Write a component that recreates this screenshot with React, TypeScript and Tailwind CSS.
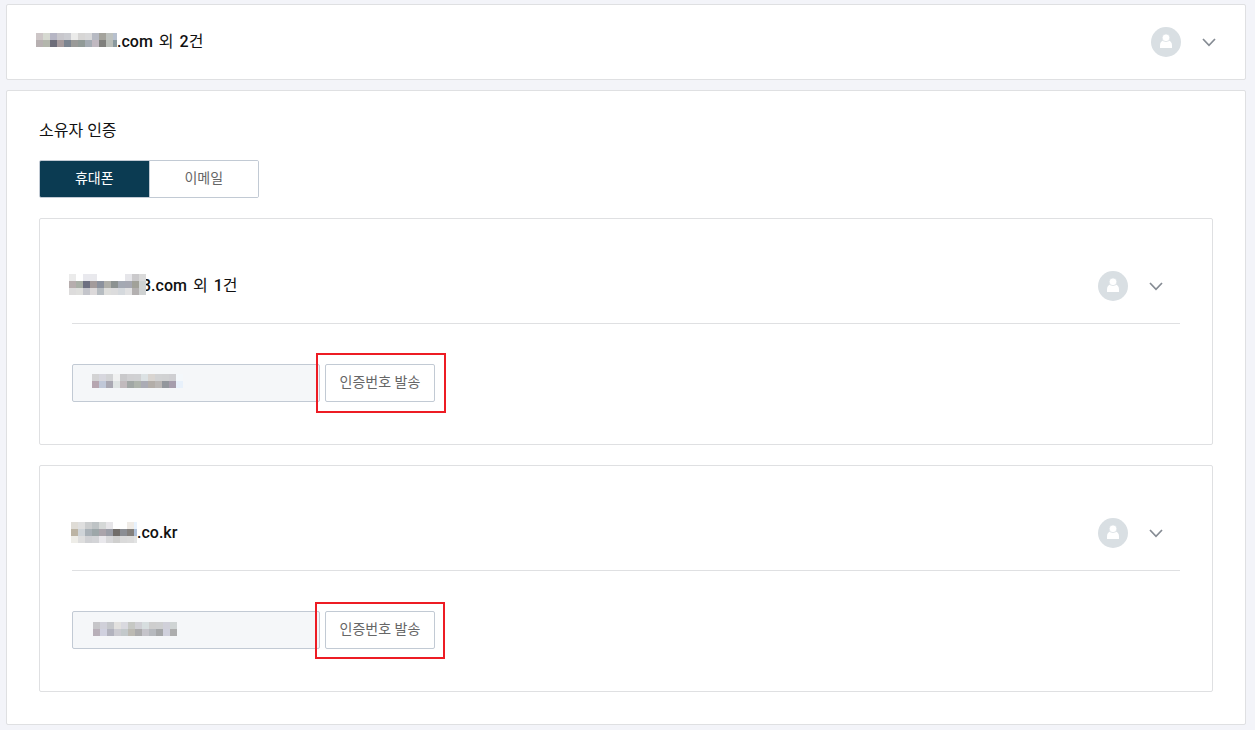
import { useState } from "react";
import type { ReactNode } from "react";

const CELL = 7;

// one string per row, colours separated by spaces, "-" leaves the cell empty
const masks = {
  summary: [
    "#cdc6c7 #d6d9d1 #b6b6c4 #c8c7cc #cbccd1 #ebebea #d7d6d5 #d9d9da #b7bac3 #a4a39c #bec2bf #b7c0ce",
    "#b7b0b1 #b3b6ac #6d6d79 #a59a9c #7b8490 #9a9a98 #919a97 #a4abb3 #c0b8c0 #7f7f7c #b9bdb8 #8a999e",
  ],
  first: [
    "#ebebeb #ffffff #e9e9ee #e9e9ed - - - - #e6e6ea #cbcacc #dadada",
    "#b6adad #a9afa6 #6d7080 #a39b9b #8b919d #afafa9 #8c9291 #a4a9b3 #a6a8b2 #a1a199 #cfd3d2",
    "#dddcdc #dfdfdd #c4c5cb #dcd9da #b6bcc1 #dededc #dcdcdd #d5d9dd #e1e1e2 #b3b0b0 #cfd2d2",
  ],
  second: [
    "#dfdcd6 #dfdfdf #cbcdce #bec3c5 #d5d8d7 #e6e5e8 - - #efebe6 #e8f2fd",
    "#bcb4a4 #cfd4d8 #a9b1b7 #9da7a9 #aaa4ab #9a9da6 #716d69 #8b8e94 #83807d #afc0d8",
    "#eeede8 #dedede #d0d1d4 #d3d4d7 #e9e8ec #d8d8da #cfcfce #dadada #dcdcdc #e2e3e3",
  ],
  firstPhone: [
    "#d3d3d4 #d7d7de #d2d3d5 #f0f1f1 #c9c9cb #d0d0d2 #d0d1d3 #dce2e4 #d9d5d1 #d2d3d4 #d1d2d3 #cfcfd2 #f4f8fb",
    "#b6a6b0 #c0c8d8 #a9a8b2 #dfe4e3 #c1babd #a1a7a5 #aeb4ac #abacb5 #b3aea9 #bab7b5 #93979d #a69dac #e8f1fb",
  ],
  secondPhone: [
    "#c6c6c9 #d0d0d9 #c5c7cb #e2e1df #d9d9df #c6c8c4 #d0d0d5 #d7dedf #cecece #cecfd0 #d0d0d9 #cfd4d4",
    "#b8b0b9 #d0d1df #b2b3be #cbcbd1 #c3c9cb #bcbab3 #ababac #c5c4ca #b6b9be #a5a7a9 #cfd0dc #adaeae",
  ],
};

function Mask({ rows, width, className = "" }: { rows: string[]; width: number; className?: string }) {
  const height = rows.length * CELL;
  return (
    <svg
      className={`shrink-0 ${className}`}
      width={width}
      height={height}
      viewBox={`0 0 ${width} ${height}`}
      shapeRendering="crispEdges"
      aria-hidden="true"
    >
      {rows.map((row, y) =>
        row.split(" ").map((fill, x) =>
          fill === "-" ? null : (
            <rect key={`${x}-${y}`} x={x * CELL} y={y * CELL} width={CELL} height={CELL} fill={fill} />
          )
        )
      )}
    </svg>
  );
}

function DomainName({ domain, count }: { domain: string; count?: number }) {
  return (
    <span className="flex gap-1.5">
      {domain}
      {count && (
        <>
          <span className="font-normal">외</span>
          <span>
            {count}
            <span className="font-normal">건</span>
          </span>
        </>
      )}
    </span>
  );
}

function Avatar() {
  return (
    <svg className="h-[30px] w-[30px] shrink-0" viewBox="0 0 30 30" aria-hidden="true">
      <circle cx="15" cy="15" r="15" fill="#d9dfe3" />
      <path d="M9 21v-2.6c0-3 1.8-4.9 4.4-4.9h3.2c2.6 0 4.4 1.9 4.4 4.9V21z" fill="#fff" />
      <circle cx="15" cy="10.8" r="3.9" fill="#fff" stroke="#d9dfe3" strokeWidth="0.8" />
    </svg>
  );
}

function AccountControls() {
  return (
    <div className="flex items-center gap-[21px]">
      <Avatar />
      <button type="button" aria-label="펼치기" className="cursor-pointer">
        <svg className="block h-[10px] w-[14px]" viewBox="0 0 14 10" fill="none">
          <path d="M1 2 7 8.3 13 2" stroke="#858b93" strokeWidth="1.7" />
        </svg>
      </button>
    </div>
  );
}

type OwnerPanelProps = {
  title: ReactNode;
  phoneMask: ReactNode;
  highlight: string;
};

function OwnerPanel({ title, phoneMask, highlight }: OwnerPanelProps) {
  return (
    <section className="rounded-xs border border-[#dfe0e2] px-8 pt-[30px] pb-[42px]">
      <div className="flex h-[75px] items-center justify-between border-b border-[#dfe0e2] pr-[17px]">
        <h3 className="flex items-center text-base font-medium">{title}</h3>
        <AccountControls />
      </div>
      <div className="flex gap-[5px] pt-10">
        <div className="relative">
          <input
            type="text"
            readOnly
            aria-label="휴대폰 번호"
            className="block h-[38px] w-[248px] rounded-xs border border-[#c2cad4] bg-[#f5f7f9] px-5 text-sm"
          />
          {phoneMask}
        </div>
        <div className="relative">
          <button
            type="button"
            className="block h-[38px] w-[110px] cursor-pointer rounded-xs border border-[#c2cad4] bg-white pb-0.5 text-sm text-[#666]"
          >
            인증번호 발송
          </button>
          <span className={`pointer-events-none absolute w-[130px] border-2 border-[#ed1c24] ${highlight}`} />
        </div>
      </div>
    </section>
  );
}

const tabs = ["휴대폰", "이메일"];

export default function App() {
  const [tab, setTab] = useState(tabs[0]);

  return (
    <div className="min-h-screen bg-[#f3f4f9] pt-1 pr-[9px] pb-[5px] pl-1.5 font-['Roboto','Noto_Sans_CJK_KR',sans-serif] text-[#111]">
      <header className="flex h-[76px] items-center justify-between rounded-xs border border-[#dfe0e2] bg-white px-[29px]">
        <h1 className="flex items-center text-base font-medium">
          <Mask rows={masks.summary} width={81} className="mb-1" />
          <DomainName domain=".com" count={2} />
        </h1>
        <AccountControls />
      </header>

      <main className="mt-2.5 rounded-xs border border-[#dfe0e2] bg-white px-8 pt-7 pb-8">
        <h2 className="text-base font-normal">소유자 인증</h2>
        <div
          className="mt-[17px] flex w-[220px] divide-x divide-[#c2cad4] overflow-hidden rounded-xs border border-[#c2cad4]"
          role="tablist"
        >
          {tabs.map((name) => (
            <button
              key={name}
              type="button"
              role="tab"
              aria-selected={tab === name}
              onClick={() => setTab(name)}
              className={`h-9 flex-1 cursor-pointer pb-0.5 text-sm ${
                tab === name ? "bg-[#0b3b52] text-white" : "bg-white text-[#666]"
              }`}
            >
              {name}
            </button>
          ))}
        </div>

        <div className="mt-5 flex flex-col gap-5">
          <OwnerPanel
            title={
              <>
                <Mask rows={masks.first} width={77} className="z-10 mb-1 -mr-1 -ml-[3px]" />
                <DomainName domain="3.com" count={1} />
              </>
            }
            phoneMask={<Mask rows={masks.firstPhone} width={91} className="absolute top-2.5 left-5" />}
            highlight="-top-[11px] -left-[9px] h-[60px]"
          />
          <OwnerPanel
            title={
              <>
                <Mask rows={masks.second} width={66} className="mb-0.5 -ml-px" />
                <DomainName domain=".co.kr" />
              </>
            }
            phoneMask={<Mask rows={masks.secondPhone} width={84} className="absolute top-[11px] left-[21px]" />}
            highlight="-top-[9px] -left-2.5 h-[57px]"
          />
        </div>
      </main>
    </div>
  );
}
